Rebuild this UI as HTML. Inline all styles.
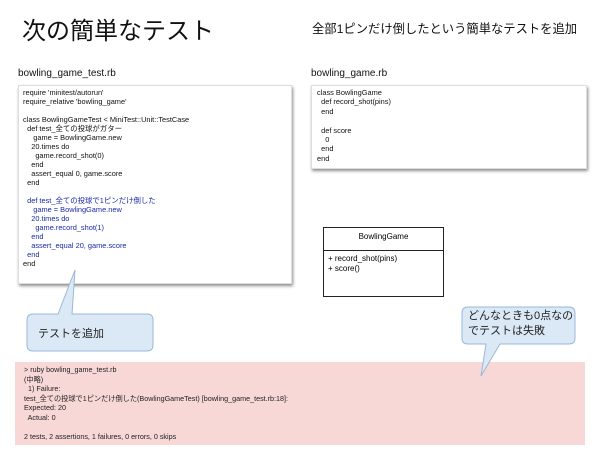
<!DOCTYPE html>
<html><head><meta charset="utf-8"><style>
body{margin:0;width:600px;height:456px;background:#fff;position:relative;overflow:hidden;font-family:"Liberation Sans","Noto Sans CJK JP",sans-serif;}
.a{position:absolute;white-space:pre;}
.box{position:absolute;background:#fff;box-shadow:1px 2px 3px rgba(0,0,0,.45);border:1px solid #ddd;}
.code{font-size:7.4px;line-height:9px;color:#111;}
.blue{color:#1a2aa8;}
</style></head><body>
<div class="a" style="left:22px;top:11px;font-size:24px;color:#111;">次の簡単なテスト</div>
<div class="a" style="left:312px;top:19px;font-size:12.3px;color:#111;">全部1ピンだけ倒したという簡単なテストを追加</div>
<div class="a" style="left:18px;top:68px;font-size:10px;color:#111;">bowling_game_test.rb</div>
<div class="a" style="left:311px;top:68px;font-size:10px;color:#111;">bowling_game.rb</div>

<div class="box" style="left:18px;top:85px;width:272px;height:197px;"></div>
<div class="a code" style="left:23px;top:88px;">require 'minitest/autorun'
require_relative 'bowling_game'

class BowlingGameTest &lt; MiniTest::Unit::TestCase
  def test_全ての投球がガター
     game = BowlingGame.new
    20.times do
      game.record_shot(0)
    end
    assert_equal 0, game.score
  end

<span class="blue">  def test_全ての投球で1ピンだけ倒した
     game = BowlingGame.new
    20.times do
      game.record_shot(1)
    end
    assert_equal 20, game.score
  end</span>
end</div>

<div class="box" style="left:311px;top:85px;width:274px;height:82px;"></div>
<div class="a code" style="left:317px;top:88px;line-height:9.4px;">class BowlingGame
  def record_shot(pins)
  end

  def score
    0
  end
end</div>

<div style="position:absolute;left:323px;top:227px;width:119px;height:68px;border:1px solid #222;"></div>
<div style="position:absolute;left:323px;top:250px;width:121px;height:1px;background:#222;"></div>
<div class="a" style="left:323px;top:232px;width:121px;text-align:center;font-size:8px;">BowlingGame</div>
<div class="a" style="left:328px;top:254px;font-size:8px;line-height:10px;">+ record_shot(pins)
+ score()</div>

<div style="position:absolute;left:15px;top:362px;width:570px;height:83px;background:#f8d7d7;"></div>
<div class="a" style="left:24px;top:365px;font-size:7.2px;line-height:9.5px;color:#222;">&gt; ruby bowling_game_test.rb
(中略)
  1) Failure:
test_全ての投球で1ピンだけ倒した(BowlingGameTest) [bowling_game_test.rb:18]:
Expected: 20
  Actual: 0

2 tests, 2 assertions, 1 failures, 0 errors, 0 skips</div>

<svg style="position:absolute;left:0;top:0" width="600" height="456">
<path d="M33,314 H58 L75,270 L72,314 H147 Q153,314 153,320 V345 Q153,351 147,351 H33 Q27,351 27,345 V320 Q27,314 33,314 Z" fill="#dbe9f7" stroke="#9ab8d8" stroke-width="1"/>
<path d="M468,307 H569 Q575,307 575,313 V338 Q575,344 569,344 H500 L481,376 L486,344 H468 Q462,344 462,338 V313 Q462,307 468,307 Z" fill="#dbe9f7" stroke="#9ab8d8" stroke-width="1"/>
</svg>
<div class="a" style="left:38px;top:325px;font-size:11px;color:#222;">テストを追加</div>
<div class="a" style="left:468px;top:309px;font-size:11px;line-height:15px;color:#222;">どんなときも0点なの
でテストは失敗</div>
</body></html>
